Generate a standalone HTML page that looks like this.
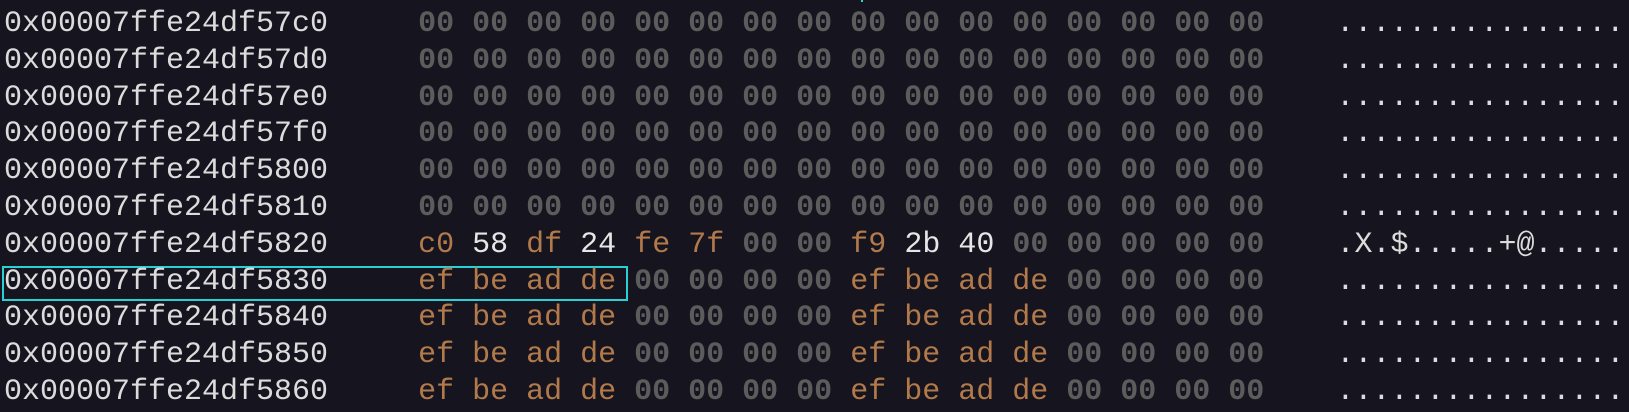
<!DOCTYPE html>
<html><head><meta charset="utf-8"><style>
html,body{margin:0;padding:0;background:#16141f;width:1629px;height:412px;overflow:hidden}
pre{margin:0;position:absolute;left:4px;top:6px;font-family:"Liberation Mono",monospace;font-size:30px;line-height:36.8px;color:#dcdcdc;letter-spacing:0}
.z{color:#5c5c5c;font-weight:bold}
.o{color:#b27a4b}
.w{color:#e6e6e6}
.box{position:absolute;left:2px;top:266px;width:622px;height:31px;border:2px solid #2ad0d6}
.mk{position:absolute;left:861px;top:0;width:2px;height:2px;background:#2ad0d6}
</style></head><body>
<div class="mk"></div>
<div class="box"></div>
<pre>0x00007ffe24df57c0     <span class="z">00 00 00 00 00 00 00 00 00 00 00 00 00 00 00 00</span>    ................
0x00007ffe24df57d0     <span class="z">00 00 00 00 00 00 00 00 00 00 00 00 00 00 00 00</span>    ................
0x00007ffe24df57e0     <span class="z">00 00 00 00 00 00 00 00 00 00 00 00 00 00 00 00</span>    ................
0x00007ffe24df57f0     <span class="z">00 00 00 00 00 00 00 00 00 00 00 00 00 00 00 00</span>    ................
0x00007ffe24df5800     <span class="z">00 00 00 00 00 00 00 00 00 00 00 00 00 00 00 00</span>    ................
0x00007ffe24df5810     <span class="z">00 00 00 00 00 00 00 00 00 00 00 00 00 00 00 00</span>    ................
0x00007ffe24df5820     <span class="o">c0</span> <span class="w">58</span> <span class="o">df</span> <span class="w">24</span> <span class="o">fe</span> <span class="o">7f</span> <span class="z">00 00</span> <span class="o">f9</span> <span class="w">2b</span> <span class="w">40</span> <span class="z">00 00 00 00 00</span>    .X.$.....+@.....
0x00007ffe24df5830     <span class="o">ef be ad de</span> <span class="z">00 00 00 00</span> <span class="o">ef be ad de</span> <span class="z">00 00 00 00</span>    ................
0x00007ffe24df5840     <span class="o">ef be ad de</span> <span class="z">00 00 00 00</span> <span class="o">ef be ad de</span> <span class="z">00 00 00 00</span>    ................
0x00007ffe24df5850     <span class="o">ef be ad de</span> <span class="z">00 00 00 00</span> <span class="o">ef be ad de</span> <span class="z">00 00 00 00</span>    ................
0x00007ffe24df5860     <span class="o">ef be ad de</span> <span class="z">00 00 00 00</span> <span class="o">ef be ad de</span> <span class="z">00 00 00 00</span>    ................</pre>
</body></html>
